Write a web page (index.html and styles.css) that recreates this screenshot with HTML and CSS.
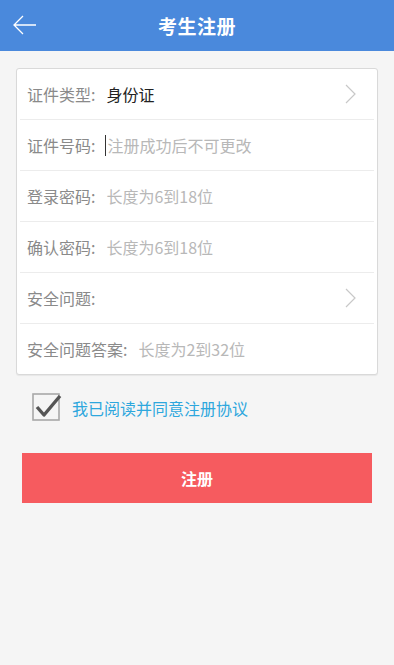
FILE: index.html
```html
<!DOCTYPE html>
<html lang="zh-CN">

<head>
    <meta charset="UTF-8">
    <meta name="viewport" content="width=device-width, initial-scale=1.0">
    <title>考生注册</title>
    <link rel="stylesheet" href="styles.css">
</head>

<body>
    <div class="header">
        <span class="back">
            <svg width="26" height="24" viewBox="0 0 26 24">
                <path d="M24 12 H2 M11 3 L2 12 L11 21" fill="none" stroke="#ffffff" stroke-width="1.3" />
            </svg>
        </span>
        <h1 class="title">考生注册</h1>
    </div>

    <div class="container">
        <div class="form-card">
            <div class="form-row">
                <span class="label">证件类型:</span>
                <span class="value">身份证</span>
                <span class="chevron">
                    <svg width="12" height="20" viewBox="0 0 12 20">
                        <path d="M1 1 L10 10 L1 19" fill="none" stroke="#c8c8c8" stroke-width="1.2" />
                    </svg>
                </span>
            </div>
            <div class="form-row">
                <span class="label">证件号码:</span>
                <span class="cursor"></span>
                <span class="placeholder tight">注册成功后不可更改</span>
            </div>
            <div class="form-row">
                <span class="label">登录密码:</span>
                <span class="placeholder">长度为6到18位</span>
            </div>
            <div class="form-row">
                <span class="label">确认密码:</span>
                <span class="placeholder">长度为6到18位</span>
            </div>
            <div class="form-row">
                <span class="label">安全问题:</span>
                <span class="chevron">
                    <svg width="12" height="20" viewBox="0 0 12 20">
                        <path d="M1 1 L10 10 L1 19" fill="none" stroke="#c8c8c8" stroke-width="1.2" />
                    </svg>
                </span>
            </div>
            <div class="form-row">
                <span class="label">安全问题答案:</span>
                <span class="placeholder">长度为2到32位</span>
            </div>
        </div>

        <div class="agree">
            <span class="checkbox">
                <svg width="30" height="30" viewBox="0 0 30 30">
                    <rect x="1" y="1" width="26" height="26" fill="#f5f5f5" stroke="#a8a8a8" stroke-width="1.6" />
                    <path d="M5 14 L12 22 L28 3" fill="none" stroke="#555555" stroke-width="3.4" stroke-linejoin="round" />
                </svg>
            </span>
            <span class="agree-text">我已阅读并同意注册协议</span>
        </div>

        <button class="submit">注册</button>
    </div>
</body>

</html>
```

FILE: styles.css
```css
html,
body {
    height: 100%;
    margin: 0;
    padding: 0;
}

body {
    background-color: #f5f5f5;
    font-family: "Noto Sans CJK SC", "Noto Sans", sans-serif;
}

.header {
    height: 51px;
    background-color: #4a89dc;
    display: flex;
    align-items: center;
    justify-content: center;
    position: relative;
}

.back {
    position: absolute;
    left: 12px;
    top: 13px;
    display: flex;
}

.title {
    margin: 0;
    color: #ffffff;
    font-size: 19px;
    font-weight: bold;
    letter-spacing: 0.5px;
}

.container {
    padding: 17px 16px 0 16px;
}

.form-card {
    background-color: #ffffff;
    border: 1px solid #d9d9d9;
    border-radius: 3px;
    box-shadow: 0 1px 1px rgba(0, 0, 0, 0.06);
    padding: 0 3px;
}

.form-row {
    height: 50px;
    display: flex;
    align-items: center;
    padding: 0 7px;
    border-bottom: 1px solid #ececec;
    font-size: 16px;
}

.form-row:last-child {
    border-bottom: none;
}

.label {
    color: #8a8a8a;
    margin-right: 11px;
}

.value {
    color: #222222;
}

.placeholder {
    color: #b8b8b8;
}

.tight {
    margin-left: 1px;
}

.cursor {
    width: 1px;
    height: 21px;
    background-color: #333333;
    margin-left: -1px;
}

.chevron {
    margin-left: auto;
    margin-right: 10px;
    display: flex;
}

.agree {
    display: flex;
    align-items: center;
    padding: 18px 0 0 16px;
}

.checkbox {
    display: flex;
    margin-right: 10px;
}

.agree-text {
    color: #2ea7dd;
    font-size: 16px;
}

.submit {
    display: block;
    width: 350px;
    height: 50px;
    margin: 30px 0 0 6px;
    border: none;
    background-color: #f65b5f;
    color: #ffffff;
    font-family: "Noto Sans CJK SC", "Noto Sans", sans-serif;
    font-size: 16px;
    font-weight: bold;
}
```
